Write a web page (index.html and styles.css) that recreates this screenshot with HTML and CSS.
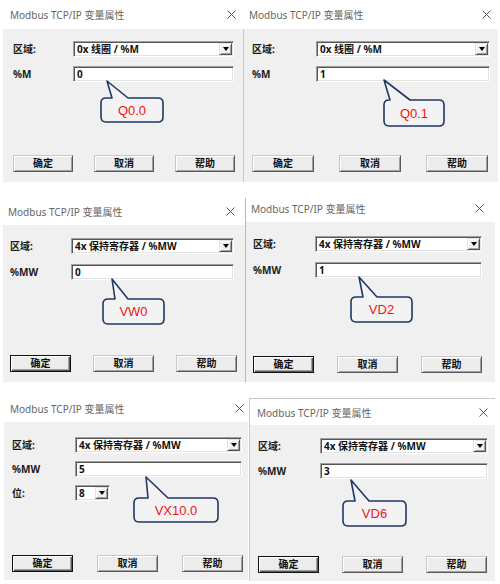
FILE: index.html
```html
<!DOCTYPE html>
<html lang="zh-CN">
<head>
<meta charset="utf-8">
<title>Modbus TCP/IP 变量属性</title>
<link rel="stylesheet" href="styles.css">
</head>
<body>
<div class="page">
  <div class="row row1">
    <section class="dlg d1">
      <header class="tbar"><span class="title">Modbus TCP/IP 变量属性</span><svg class="close" width="9" height="9" viewBox="0 0 9 9"><path d="M0.5 0.5L8.5 8.5M8.5 0.5L0.5 8.5"/></svg></header>
      <div class="body">
        <div class="form">
          <span class="lbl">区域:</span>
          <div class="field"><span class="val">0x 线圈 / %M</span><span class="ddb"></span></div>
          <span class="lbl">%M</span>
          <div class="field"><span class="val">0</span></div>
        </div>
        <div class="btns"><button class="btn">确定</button><button class="btn">取消</button><button class="btn">帮助</button></div>
      </div>
      <div class="callout c1"><svg width="64" height="43" viewBox="0 0 64 43"><path d="M12 18 L7 1 L28 18 H58 Q63 18 63 23 V37 Q63 42 58 42 H6 Q1 42 1 37 V23 Q1 18 6 18 Z"/></svg><span class="ctext">Q0.0</span></div>
    </section>
    <section class="dlg d2">
      <header class="tbar"><span class="title">Modbus TCP/IP 变量属性</span><svg class="close" width="9" height="9" viewBox="0 0 9 9"><path d="M0.5 0.5L8.5 8.5M8.5 0.5L0.5 8.5"/></svg></header>
      <div class="body">
        <div class="form">
          <span class="lbl">区域:</span>
          <div class="field"><span class="val">0x 线圈 / %M</span><span class="ddb"></span></div>
          <span class="lbl">%M</span>
          <div class="field"><span class="val">1</span></div>
        </div>
        <div class="btns"><button class="btn">确定</button><button class="btn">取消</button><button class="btn">帮助</button></div>
      </div>
      <div class="callout c2"><svg width="62" height="48" viewBox="0 0 62 48"><path d="M7 21 L1 1 L27 21 H56 Q61 21 61 26 V42 Q61 47 56 47 H6 Q1 47 1 42 V26 Q1 21 6 21 Z"/></svg><span class="ctext">Q0.1</span></div>
    </section>
  </div>
  <div class="row row2">
    <section class="dlg d3">
      <header class="tbar"><span class="title">Modbus TCP/IP 变量属性</span><svg class="close" width="9" height="9" viewBox="0 0 9 9"><path d="M0.5 0.5L8.5 8.5M8.5 0.5L0.5 8.5"/></svg></header>
      <div class="body">
        <div class="form">
          <span class="lbl">区域:</span>
          <div class="field"><span class="val">4x 保持寄存器 / %MW</span><span class="ddb"></span></div>
          <span class="lbl">%MW</span>
          <div class="field"><span class="val">0</span></div>
        </div>
        <div class="btns"><button class="btn def">确定</button><button class="btn">取消</button><button class="btn">帮助</button></div>
      </div>
      <div class="callout c3"><svg width="63" height="47" viewBox="0 0 63 47"><path d="M13 21 L10 1 L26 21 H57 Q62 21 62 26 V41 Q62 46 57 46 H6 Q1 46 1 41 V26 Q1 21 6 21 Z"/></svg><span class="ctext">VW0</span></div>
    </section>
    <section class="dlg d4">
      <header class="tbar"><span class="title">Modbus TCP/IP 变量属性</span><svg class="close" width="9" height="9" viewBox="0 0 9 9"><path d="M0.5 0.5L8.5 8.5M8.5 0.5L0.5 8.5"/></svg></header>
      <div class="body">
        <div class="form">
          <span class="lbl">区域:</span>
          <div class="field"><span class="val">4x 保持寄存器 / %MW</span><span class="ddb"></span></div>
          <span class="lbl">%MW</span>
          <div class="field"><span class="val">1</span></div>
        </div>
        <div class="btns"><button class="btn def">确定</button><button class="btn">取消</button><button class="btn">帮助</button></div>
      </div>
      <div class="callout c4"><svg width="63" height="47" viewBox="0 0 63 47"><path d="M13 21 L9 1 L27 21 H57 Q62 21 62 26 V41 Q62 46 57 46 H6 Q1 46 1 41 V26 Q1 21 6 21 Z"/></svg><span class="ctext">VD2</span></div>
    </section>
  </div>
  <div class="row row3">
    <section class="dlg d5">
      <header class="tbar"><span class="title">Modbus TCP/IP 变量属性</span><svg class="close" width="9" height="9" viewBox="0 0 9 9"><path d="M0.5 0.5L8.5 8.5M8.5 0.5L0.5 8.5"/></svg></header>
      <div class="body">
        <div class="form">
          <span class="lbl">区域:</span>
          <div class="field"><span class="val">4x 保持寄存器 / %MW</span><span class="ddb"></span></div>
          <span class="lbl">%MW</span>
          <div class="field"><span class="val">5</span></div>
          <span class="lbl">位:</span>
          <div class="field small"><span class="val">8</span><span class="ddb"></span></div>
        </div>
        <div class="btns"><button class="btn def">确定</button><button class="btn">取消</button><button class="btn">帮助</button></div>
      </div>
      <div class="callout c5"><svg width="86" height="47" viewBox="0 0 86 47"><path d="M15 22 L13 1 L35 22 H80 Q85 22 85 27 V41 Q85 46 80 46 H6 Q1 46 1 41 V27 Q1 22 6 22 Z"/></svg><span class="ctext">VX10.0</span></div>
    </section>
    <section class="dlg d6">
      <header class="tbar"><span class="title">Modbus TCP/IP 变量属性</span><svg class="close" width="9" height="9" viewBox="0 0 9 9"><path d="M0.5 0.5L8.5 8.5M8.5 0.5L0.5 8.5"/></svg></header>
      <div class="body">
        <div class="form">
          <span class="lbl">区域:</span>
          <div class="field"><span class="val">4x 保持寄存器 / %MW</span><span class="ddb"></span></div>
          <span class="lbl">%MW</span>
          <div class="field"><span class="val">3</span></div>
        </div>
        <div class="btns"><button class="btn def">确定</button><button class="btn">取消</button><button class="btn">帮助</button></div>
      </div>
      <div class="callout c6"><svg width="65" height="48" viewBox="0 0 65 48"><path d="M13 22 L9 1 L27 22 H59 Q64 22 64 27 V42 Q64 47 59 47 H6 Q1 47 1 42 V27 Q1 22 6 22 Z"/></svg><span class="ctext">VD6</span></div>
    </section>
  </div>
</div>
</body>
</html>
```

FILE: styles.css
```css
* { box-sizing: border-box; }
html, body { margin: 0; padding: 0; background: #fff; }
body {
  width: 500px;
  height: 584px;
  overflow: hidden;
  font-family: "Noto Sans", "Noto Sans CJK SC", sans-serif;
}
.page { display: flex; flex-direction: column; }
.row { display: flex; align-items: flex-start; }
.row1 { height: 182px; }
.row2 { height: 200px; }

.dlg { position: relative; display: flex; flex-direction: column; }
.tbar {
  height: var(--tb);
  display: flex;
  align-items: center;
  justify-content: space-between;
  padding: 0 var(--cx) var(--tpb, 0px) var(--tx);
  background: #fff;
}
.title { font-size: 10px; color: #666; white-space: nowrap; }
.close { display: block; }
.close path { stroke: #555; stroke-width: 1; fill: none; }

.body {
  height: var(--bh);
  background: #f0f0f0;
  display: flex;
  flex-direction: column;
}
.form {
  display: grid;
  grid-template-columns: calc(var(--fx) - var(--lx)) var(--fw);
  grid-auto-rows: 16px;
  row-gap: var(--rg);
  padding: var(--ft) 0 0 var(--lx);
  align-items: center;
}
.lbl {
  font-size: 10px;
  font-weight: 700;
  color: #1a1a1a;
  line-height: 16px;
  white-space: nowrap;
}
.field {
  height: 16px;
  background: #fff;
  border: 1px solid;
  border-color: #a0a0a0 #fff #fff #a0a0a0;
  box-shadow: inset 1px 1px 0 #555, inset -1px -1px 0 #e3e3e3;
  display: flex;
  align-items: center;
  padding: 0 1px 0 3px;
  font-size: 10px;
  font-weight: 700;
  color: #111;
}
.val { flex: 1; white-space: nowrap; line-height: 14px; }
.ddb {
  width: 13px;
  height: 12px;
  background: #f0f0f0;
  border: 1px solid;
  border-color: #e3e3e3 #555 #555 #e3e3e3;
  box-shadow: inset 1px 1px 0 #fff, inset -1px -1px 0 #a0a0a0;
  display: flex;
  align-items: center;
  justify-content: center;
}
.ddb::after {
  content: "";
  border-left: 3.5px solid transparent;
  border-right: 3.5px solid transparent;
  border-top: 4px solid #000;
}
.small { width: 35px; }

.btns {
  display: flex;
  gap: var(--bg);
  padding-left: var(--lx);
  margin-top: auto;
  margin-bottom: var(--pb);
}
.btn {
  width: var(--bw);
  height: 17px;
  padding: 0;
  margin: 0;
  font-family: inherit;
  font-size: 10px;
  font-weight: 700;
  color: #111;
  background: #ececec;
  border: 1px solid;
  border-color: #c8c8c8 #5a5a5a #5a5a5a #c8c8c8;
  box-shadow: inset 1px 1px 0 #fff, inset -1px -1px 0 #a0a0a0;
  line-height: 15px;
}
.btn.def {
  border-color: #111;
  box-shadow: inset 1px 1px 0 #fff, inset -1px -1px 0 #5a5a5a, inset -2px -2px 0 #a0a0a0;
}

.callout { position: absolute; }
.callout svg { position: absolute; left: 0; top: 0; }
.callout path { fill: #f3f3f3; stroke: #1f3864; stroke-width: 1.6; stroke-linejoin: round; }
.ctext {
  position: absolute;
  left: 0;
  right: 0;
  top: var(--t);
  bottom: 0;
  display: flex;
  align-items: center;
  justify-content: center;
  font-family: "Liberation Sans", Arial, sans-serif;
  font-size: 13px;
  color: #f01414;
}

/* dialog variants */
.d1 { margin-left: 3px; width: 240px;
  --tb: 29px; --bh: 153px; --tx: 7px; --cx: 7px; --lx: 10px; --fx: 70px; --fw: 161px;
  --ft: 12px; --rg: 9px; --bw: 60px; --bg: 21px; --pb: 10px; }
.d2 { width: 255px;
  --tb: 29px; --bh: 153px; --tx: 6px; --cx: 7px; --lx: 8px; --fx: 72px; --fw: 174px;
  --ft: 12px; --rg: 9px; --bw: 62px; --bg: 25px; --pb: 10px; }
.d2 .body { border-left: 1px solid #c8c8c8; }
.d3 { margin: 16px 0 0 3px; width: 242px;
  --tb: 27px; --bh: 157px; --tx: 5px; --cx: 10px; --lx: 7px; --fx: 68px; --fw: 163px;
  --ft: 13px; --rg: 10px; --bw: 61px; --bg: 22px; --pb: 10px; }
.d4 { margin-top: 16px; width: 250px; border-left: 1px solid #b8b8b8;
  --tb: 24px; --tpb: 4px; --bh: 160px; --tx: 5px; --cx: 11px; --lx: 7px; --fx: 69px; --fw: 167px;
  --ft: 14px; --rg: 10px; --bw: 61px; --bg: 23px; --pb: 9px; }
.d5 { margin: 13px 0 0 4px; width: 244px;
  --tb: 27px; --bh: 158px; --tx: 6px; --cx: 4px; --lx: 8px; --fx: 71px; --fw: 167px;
  --ft: 15px; --rg: 8px; --bw: 61px; --bg: 24px; --pb: 8px; }
.d6 { margin: 16px 0 0 1px; width: 246px; border-top: 1px solid #c8c8c8; border-left: 1px solid #c8c8c8;
  --tb: 26px; --bh: 156px; --tx: 7px; --cx: 7px; --lx: 8px; --fx: 70px; --fw: 168px;
  --ft: 13px; --rg: 9px; --bw: 61px; --bg: 23px; --pb: 8px; }

.c1 { left: 97px; top: 80px; width: 64px; height: 43px; --t: 17px; }
.c2 { left: 140px; top: 79px; width: 62px; height: 48px; --t: 20px; }
.c3 { left: 99px; top: 80px; width: 63px; height: 47px; --t: 20px; }
.c4 { left: 104px; top: 78px; width: 63px; height: 47px; --t: 20px; }
.c5 { left: 129px; top: 81px; width: 86px; height: 47px; --t: 21px; }
.c6 { left: 92px; top: 80px; width: 65px; height: 48px; --t: 21px; }
```
